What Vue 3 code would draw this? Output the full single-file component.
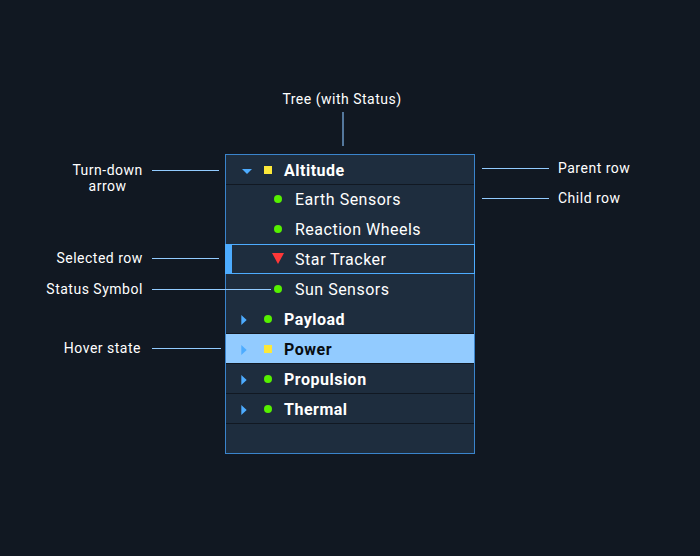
<script setup>
const left = [
  { id: 'arrow', lines: ['Turn-down', 'arrow'] },
  { id: 'selected', lines: ['Selected row'] },
  { id: 'status', lines: ['Status Symbol'] },
  { id: 'hover', lines: ['Hover state'] },
]
const right = ['Parent row', 'Child row']
const rows = [
  { label: 'Altitude', kind: 'parent', status: 'caution', open: true },
  { label: 'Earth Sensors', kind: 'child', status: 'normal' },
  { label: 'Reaction Wheels', kind: 'child', status: 'normal' },
  { label: 'Star Tracker', kind: 'child', status: 'critical', state: 'selected' },
  { label: 'Sun Sensors', kind: 'child', status: 'normal' },
  { label: 'Payload', kind: 'parent', status: 'normal' },
  { label: 'Power', kind: 'parent', status: 'caution', state: 'hovered' },
  { label: 'Propulsion', kind: 'parent', status: 'normal' },
  { label: 'Thermal', kind: 'parent', status: 'normal' },
]
</script>

<template>
  <main class="page">
    <header class="heading">
      <span class="title">Tree (with Status)</span>
      <i class="stem"></i>
    </header>
    <section class="figure">
      <div class="notes notes-left">
        <div v-for="n in left" :key="n.id" class="note" :class="'note-' + n.id">
          <span class="note-text"><span v-for="l in n.lines" :key="l">{{ l }}</span></span>
          <i class="leader"></i>
        </div>
      </div>
      <ul class="tree">
        <li v-for="r in rows" :key="r.label" class="row" :class="[r.kind, r.state]">
          <span v-if="r.kind === 'parent'" class="toggle">
            <svg v-if="r.open" class="down" width="10" height="5" viewBox="0 0 10 5"><path d="M0 0H10L5 5Z" /></svg>
            <svg v-else class="closed" width="6" height="10" viewBox="0 0 6 10"><path d="M0.3 0L5.7 5L0.3 10Z" /></svg>
          </span>
          <span class="symbol">
            <svg v-if="r.status === 'critical'" width="12" height="12" viewBox="0 0 12 12"><path d="M0 0H12L6 11Z" fill="#ff3838" /></svg>
            <i v-else :class="r.status"></i>
          </span>
          <span class="label">{{ r.label }}</span>
        </li>
      </ul>
      <div class="notes notes-right">
        <div v-for="n in right" :key="n" class="note">
          <i class="leader"></i>
          <span class="note-text">{{ n }}</span>
        </div>
      </div>
    </section>
  </main>
</template>

<style>
body {
  background: #111822;
}
</style>

<style scoped>
.page {
  box-sizing: border-box;
  width: 700px;
  height: 556px;
  padding-top: 91px;
  background: #111822;
  color: #fff;
  font-family: Roboto, sans-serif;
  font-size: 14px;
  line-height: 16px;
  letter-spacing: 0.5px;
}
.heading {
  display: flex;
  flex-direction: column;
  height: 63px;
}
.title {
  margin-left: 282.4px;
}
.stem {
  width: 2px;
  height: 34px;
  margin: 5px 0 0 342px;
  background: #54779c;
}
.figure {
  display: grid;
  grid-template-columns: 225px 250px 225px;
}
.notes {
  display: flex;
  flex-direction: column;
  position: relative;
  z-index: 1;
}
.note {
  display: flex;
  white-space: nowrap;
}
.leader {
  flex: none;
  width: 67px;
  height: 1px;
  margin-top: 8px;
  background: #92cbff;
}
.notes-left {
  padding-top: 8px;
}
.notes-left .note-text {
  display: flex;
  flex-direction: column;
  align-items: center;
  margin: 0 9.2px 0 auto;
}
.notes-left .leader {
  margin-right: 6px;
}
.notes-left .note-selected {
  margin-top: 56px;
}
.notes-left .note-status {
  margin-top: 15px;
}
.notes-left .note-status .leader {
  width: 119px;
  margin-right: -46px;
}
.notes-left .note-hover {
  margin-top: 43px;
}
.notes-left .note-hover .note-text {
  margin-right: 11px;
}
.notes-left .note-hover .leader {
  width: 69px;
  margin-right: 4px;
}
.notes-right {
  gap: 14px;
  padding: 6px 0 0 7px;
}
.notes-right .note-text {
  margin-left: 9px;
}
.tree {
  box-sizing: border-box;
  height: 300px;
  margin: 0;
  padding: 0;
  border: 1px solid #3a84cc;
  background: #1e2d3e;
  list-style: none;
}
.row {
  box-sizing: border-box;
  display: flex;
  align-items: center;
  height: 30px;
  font-size: 16px;
  line-height: 20px;
}
.parent {
  padding: 1px 0 0 14px;
  border-bottom: 1px solid #111822;
  font-weight: 700;
}
.child {
  padding-left: 44px;
}
.toggle {
  display: flex;
  width: 20px;
  padding-left: 1px;
  box-sizing: border-box;
}
.toggle svg {
  fill: #4dacff;
}
.toggle .down {
  margin: 3px 0 0 1px;
}
.toggle .closed {
  margin-top: 2px;
}
.symbol {
  display: flex;
  justify-content: center;
  width: 16px;
}
.child .symbol {
  margin-bottom: 2px;
}
.normal {
  width: 8px;
  height: 8px;
  border-radius: 50%;
  background: #56f000;
}
.caution {
  width: 8px;
  height: 8px;
  background: #fce83a;
}
.label {
  margin-left: 8px;
}
.parent .label {
  margin-top: 2px;
}
.child .label {
  margin-left: 9px;
}
.child.selected {
  margin: -1px -1px 0;
  padding: 2px 0 0 38px;
  border: solid #4dacff;
  border-width: 1px 1px 1px 7px;
}
.selected + .child {
  padding-top: 2px;
}
.hovered {
  background: #92cbff;
  color: #080c11;
}
</style>
